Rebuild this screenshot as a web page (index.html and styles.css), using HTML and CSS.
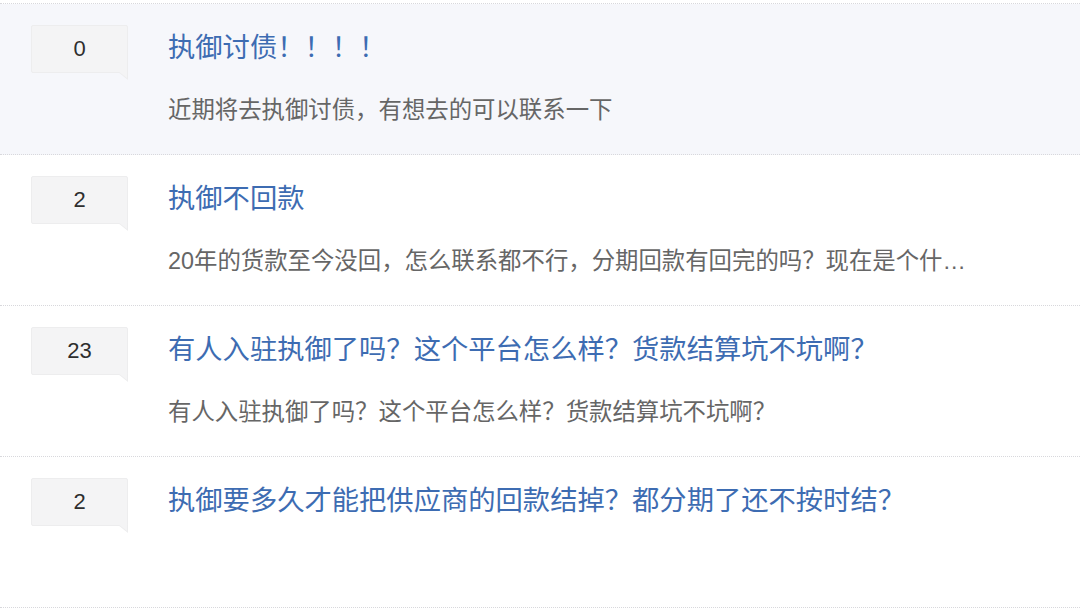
FILE: index.html
```html
<!DOCTYPE html>
<html lang="zh-CN">
<head>
<meta charset="utf-8">
<title>执御</title>
<link rel="stylesheet" href="styles.css">
</head>
<body>
<ul class="topic-list">
  <li class="topic active">
    <div class="count"><span>0</span></div>
    <div class="topic-body">
      <a class="topic-title" href="#">执御讨债！！！！</a>
      <p class="topic-desc">近期将去执御讨债，有想去的可以联系一下</p>
    </div>
  </li>
  <li class="topic">
    <div class="count"><span>2</span></div>
    <div class="topic-body">
      <a class="topic-title" href="#">执御不回款</a>
      <p class="topic-desc">20年的货款至今没回，怎么联系都不行，分期回款有回完的吗？现在是个什…</p>
    </div>
  </li>
  <li class="topic">
    <div class="count"><span>23</span></div>
    <div class="topic-body">
      <a class="topic-title" href="#">有人入驻执御了吗？这个平台怎么样？货款结算坑不坑啊？</a>
      <p class="topic-desc">有人入驻执御了吗？这个平台怎么样？货款结算坑不坑啊？</p>
    </div>
  </li>
  <li class="topic">
    <div class="count"><span>2</span></div>
    <div class="topic-body">
      <a class="topic-title" href="#">执御要多久才能把供应商的回款结掉？都分期了还不按时结？</a>
      <p class="topic-desc"></p>
    </div>
  </li>
</ul>
</body>
</html>
```
FILE: styles.css
```css
html, body {
  margin: 0;
  padding: 0;
  background: #ffffff;
}
body {
  font-family: "Liberation Sans", "Noto Sans CJK SC", sans-serif;
  padding-top: 3px;
}
.topic-list {
  list-style: none;
  margin: 0;
  padding: 0;
  border-top: 1px dotted #d8d8dc;
}
.topic {
  display: flex;
  height: 151px;
  box-sizing: border-box;
  padding: 21px 0 0 31px;
  border-bottom: 1px dotted #d8d8dc;
}
.topic.active {
  background: #f6f7fb;
}
.count {
  position: relative;
  flex: 0 0 auto;
  width: 97px;
  height: 48px;
  box-sizing: border-box;
  background: #f4f4f5;
  border: 1px solid #ededee;
  border-radius: 2px;
  display: flex;
  align-items: center;
  justify-content: center;
  font-size: 22px;
  color: #2e2e2e;
}
.count::after {
  content: "";
  position: absolute;
  right: -1px;
  top: 100%;
  width: 0;
  height: 0;
  border-top: 8px solid #ededee;
  border-left: 10px solid transparent;
}
.count::before {
  content: "";
  position: absolute;
  right: 0;
  top: 100%;
  margin-top: -1px;
  width: 0;
  height: 0;
  border-top: 7px solid #f4f4f5;
  border-left: 9px solid transparent;
  z-index: 1;
}
.topic-body {
  margin-left: 40px;
  width: 840px;
  min-width: 0;
}
.topic-title {
  display: block;
  font-size: 27.3px;
  line-height: 36px;
  margin-top: 5px;
  color: #3d6cb2;
  text-decoration: none;
  white-space: nowrap;
}
.topic-desc {
  margin: 28px 0 0 0;
  font-size: 23.4px;
  line-height: 32px;
  color: #666666;
  white-space: nowrap;
}
```
